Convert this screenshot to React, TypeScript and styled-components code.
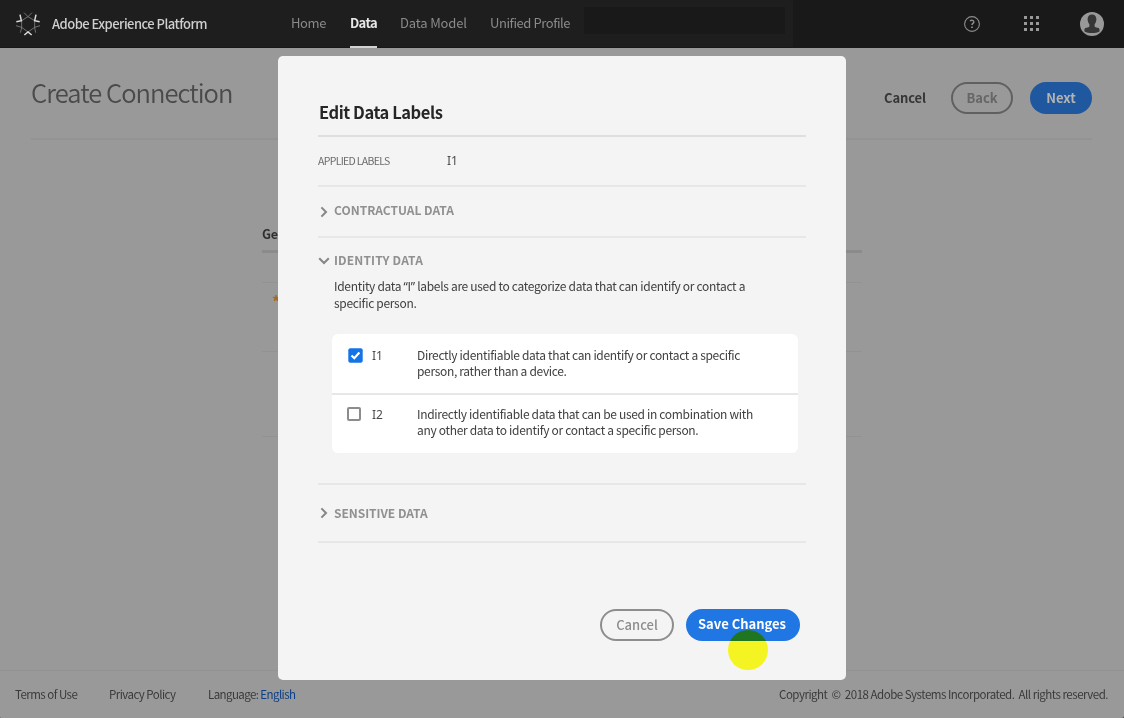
import React from 'react';
import styled, { createGlobalStyle } from 'styled-components';

const sans = '"Noto Sans CJK SC", "Noto Sans", sans-serif';

const GlobalStyle = createGlobalStyle`
  * { box-sizing: border-box; }
  body { margin: 0; background: #333; font-family: ${sans}; }
  button { font-family: inherit; margin: 0; }
  h1, h2, h3, p { margin: 0; }
`;

const Page = styled.div`
  position: relative;
  display: flex;
  flex-direction: column;
  width: 1124px;
  height: 718px;
  overflow: hidden;
  background: #999;
  border-radius: 0 0 2px 1px;
`;

/* ---- top bar ---- */
const TopBar = styled.header`
  display: flex;
  flex: 0 0 48px;
  height: 48px;
  background: #191919;
`;
const TopLeft = styled.div`
  display: flex;
  width: 793px;
  height: 48px;
  padding-left: 16px;
  align-items: center;
  background: #1e1e1e;
  box-shadow: inset 0 -1px #1a171a;
`;
const Brand = styled.div`
  flex: 0 0 251px;
  padding: 0 0 0 12px;
  font-size: 13px;
  font-weight: 500;
  line-height: 20px;
  letter-spacing: -0.53px;
  color: #cfcfcf;
  white-space: nowrap;
`;
const NavItem = styled.a<{ $w: number; $ls: number; $active?: boolean }>`
  flex: 0 0 ${p => p.$w}px;
  height: 48px;
  margin-right: 23px;
  line-height: 46px;
  font-size: 13px;
  font-weight: ${p => (p.$active ? 700 : 400)};
  letter-spacing: ${p => p.$ls}px;
  white-space: nowrap;
  color: ${p => (p.$active ? '#e8e8e8' : '#8a8a8a')};
  box-shadow: ${p => (p.$active ? 'inset 0 -2px #d2d2d2' : 'none')};
`;
const SearchSlot = styled.div`
  flex: 0 0 201px;
  height: 27px;
  margin: 0 0 7px -10px;
  background: #191919;
`;
const TopRight = styled.div`
  display: flex;
  flex: 1;
  height: 48px;
  align-items: center;
  justify-content: flex-end;
  padding-right: 20px;
`;
const HelpIcon = styled.svg`margin-right: 44px;`;
const AppsIcon = styled.svg`margin: 0 41px 1px 0;`;

/* ---- page behind the dialog ---- */
const Main = styled.main`
  flex: 1;
  padding: 0 32px 0 31px;
`;
const TitleRow = styled.div`
  display: flex;
  height: 92px;
  padding-top: 34px;
  border-bottom: 2px solid #939393;
`;
const PageTitle = styled.h1`
  flex: 1;
  margin-top: -8px;
  font-size: 25.5px;
  font-weight: 350;
  line-height: 36px;
  letter-spacing: -0.96px;
  color: #4a4a4a;
`;
const TextButton = styled.button`
  width: 42px;
  height: 32px;
  margin-right: 25px;
  padding: 0 0 1px;
  border: 0;
  background: none;
  font-size: 13px;
  font-weight: 700;
  letter-spacing: -0.15px;
  white-space: nowrap;
  color: #363636;
`;
const Pill = styled.button<{ $w: number; $bg?: string; $line?: string; $fg: string; $weight?: number; $lift?: number; $pull?: number }>`
  width: ${p => p.$w}px;
  height: 32px;
  padding: 0 ${p => p.$pull ?? 0}px ${p => p.$lift ?? 0}px 0;
  border: ${p => (p.$line ? `2px solid ${p.$line}` : '0')};
  border-radius: 16px;
  background: ${p => p.$bg ?? 'transparent'};
  color: ${p => p.$fg};
  font-size: 13px;
  font-weight: ${p => p.$weight ?? 500};
  line-height: 20px;
  white-space: nowrap;
`;
const Actions = styled.div<{ $gap: number }>`
  display: flex;
  gap: ${p => p.$gap}px;
`;
const Form = styled.section`
  width: 600px;
  margin: 84px 0 0 231px;
`;
const FormHeading = styled.h2`
  height: 29px;
  font-size: 12.5px;
  font-weight: 700;
  line-height: 20px;
  letter-spacing: -0.3px;
  color: #303030;
  border-bottom: 3px solid #8b8b8b;
`;
const FormRow = styled.div<{ $h: number }>`
  height: ${p => p.$h}px;
  padding: 8px 0 0 10px;
  border-bottom: 1px solid #929292;
  font-size: 16px;
  font-weight: 700;
  line-height: 20px;
  color: #a5691f;
`;
const Footer = styled.footer`
  display: flex;
  flex: 0 0 48px;
  height: 48px;
  padding: 0 16px 0 15px;
  border-top: 1px solid #929292;
  font-size: 11.5px;
  line-height: 46px;
  letter-spacing: -0.49px;
  white-space: pre;
  color: #3a3a3a;
`;
const FooterLink = styled.a<{ $w: number }>`
  width: ${p => p.$w}px;
  letter-spacing: -0.54px;
`;
const Language = styled.span`letter-spacing: -0.58px;`;
const Locale = styled.span`color: #0d3f87;`;
const Copyright = styled.span`margin-left: auto;`;

/* ---- dialog ---- */
const Dialog = styled.div`
  position: absolute;
  left: 278px;
  top: 56px;
  width: 568px;
  height: 624px;
  padding: 0 40px;
  background: #f4f4f4;
  border-radius: 5px;
`;
const DialogTitle = styled.h2`
  height: 81px;
  padding: 46px 0 0 1px;
  border-bottom: 2px solid #dfdfdf;
  font-size: 16.5px;
  font-weight: 700;
  line-height: 20px;
  letter-spacing: -0.44px;
  color: #262626;
`;
const Band = styled.div<{ $h: number; $lift?: number }>`
  display: flex;
  align-items: center;
  height: ${p => p.$h}px;
  padding-bottom: ${p => p.$lift ?? 0}px;
  border-bottom: 2px solid #e7e7e7;
`;
const AppliedCaption = styled.span`
  width: 129px;
  font-size: 10.5px;
  letter-spacing: -0.68px;
  line-height: 16px;
  color: #6c6c6c;
`;
const Code = styled.span`
  display: block;
  font-family: "Noto Sans", sans-serif;
  font-size: 12px;
  line-height: 16px;
  color: #4a4a4a;
`;
const Heading = styled.h3<{ $ls: number; $drop: number }>`
  display: flex;
  align-items: center;
  height: 20px;
  font-size: 12px;
  font-weight: 700;
  line-height: 20px;
  letter-spacing: ${p => p.$ls}px;
  color: #909090;
  svg { margin: ${p => p.$drop}px 4px 0 0; }
`;
const OpenSection = styled.div`
  height: 247px;
  padding-top: 12px;
  border-bottom: 2px solid #e7e7e7;
`;
const Intro = styled.p`
  height: 34px;
  margin: 7px 0 23px 16px;
  font-size: 12px;
  line-height: 17px;
  letter-spacing: -0.31px;
  color: #404040;
  white-space: nowrap;
`;
const Quote = styled.span`
  font-family: "Noto Sans", sans-serif;
  line-height: 1px;
`;
const Options = styled.div`
  width: 466px;
  margin-left: 14px;
  border-radius: 6px;
  background: #fff;
`;
const Option = styled.label<{ $h: number; $top: number; $last?: boolean }>`
  display: flex;
  height: ${p => p.$h}px;
  padding: ${p => p.$top}px 0 0 16px;
  border-bottom: ${p => (p.$last ? '0' : '2px solid #e7e7e7')};
`;
const BoxSlot = styled.span`
  width: 24px;
  padding-top: 1px;
  svg { display: block; }
`;
const CodeSlot = styled.span`
  width: 45px;
  padding-top: 1px;
`;
const Description = styled.p<{ $ls: number }>`
  font-size: 12px;
  line-height: 16px;
  letter-spacing: ${p => p.$ls}px;
  color: #404040;
  white-space: nowrap;
`;
const DialogActions = styled.div`
  display: flex;
  justify-content: flex-end;
  gap: 12px;
  padding: 66px 6px 0 0;
`;
const Cursor = styled.div`
  position: absolute;
  left: 728px;
  top: 630px;
  width: 40px;
  height: 40px;
  border-radius: 50%;
  background: #ffff24;
  mix-blend-mode: multiply;
`;

const Logo = () => (
  <svg width="24" height="24" viewBox="48 36 72 72" fill="none">
    <g stroke="#8e8e8e" strokeWidth="2.2">
      <path d="M72 38 84 50 104 62M96 38 84 50 65 62" />
      <path d="M65 60V84L61 98M104 60V84L107 98" />
      <path d="M48 77 65 82 84 96M120 77 104 82 84 96" />
    </g>
    <g stroke="#dcdcdc" strokeWidth="4.5">
      <path d="M49 65 64 62 60 44" />
      <path d="M119 65 104 62 108 44" />
      <path d="M73 105 84 96 95 105" />
    </g>
  </svg>
);

const Chevron = ({ open }: { open?: boolean }) => (
  <svg width="12" height="12" viewBox="0 0 12 12" fill="none" stroke="#868686" strokeWidth="2">
    <path d={open ? 'M1.2 3.2 6 8l4.8-4.8' : 'M3.4 1.4 8 6l-4.6 4.6'} />
  </svg>
);

export default function App() {
  return (
    <Page>
      <GlobalStyle />
      <TopBar>
        <TopLeft>
          <Logo />
          <Brand>Adobe Experience Platform</Brand>
          <NavItem $w={36} $ls={-0.36}>Home</NavItem>
          <NavItem $w={27} $ls={-0.66} $active>Data</NavItem>
          <NavItem $w={67} $ls={-0.14}>Data Model</NavItem>
          <NavItem $w={81} $ls={-0.43}>Unified Profile</NavItem>
          <SearchSlot />
        </TopLeft>
        <TopRight>
          <HelpIcon width="16" height="16" viewBox="0.5 0.5 16 16" fill="none" stroke="#8c8c8c">
            <circle cx="8.5" cy="8.5" r="7.4" strokeWidth="1.1" />
            <path d="M6.5 5.4c1.5-1.1 3.8-.6 3.8 1 0 1.5-1.8 1.5-1.8 3.2" strokeWidth="1.5" />
            <path d="M8.5 11v1.6" strokeWidth="1.7" />
          </HelpIcon>
          <AppsIcon width="15" height="15" viewBox="0 0 15 15" fill="#999">
            {[0, 6, 12].map(y => [0, 6, 12].map(x => <rect key={`${x}-${y}`} x={x} y={y} width="3" height="3" />))}
          </AppsIcon>
          <svg width="24" height="24" viewBox="0 0 24 24">
            <circle cx="12" cy="12" r="12" fill="#999" />
            <path
              fill="#363636"
              d="M12 2.6c2.7 0 4.4 1.8 4.4 4.6 0 2-.8 3.9-1.8 5v2c0 .5.3.8.9 1l3 .9c1 .4 1.2 1.4 1 3.4C17.4 20.8 14.8 21 12 21s-5.4-.2-7.5-1.5c-.2-2 0-3 1-3.4l3-.9c.6-.2.9-.5.9-1v-2c-1-1.1-1.8-3-1.8-5 0-2.8 1.7-4.600 4.400-4.600z"
            />
          </svg>
        </TopRight>
      </TopBar>

      <Main>
        <TitleRow>
          <PageTitle>Create Connection</PageTitle>
          <TextButton>Cancel</TextButton>
          <Actions $gap={17}>
            <Pill $w={62} $line="#606060" $fg="#666" $weight={700}>Back</Pill>
            <Pill $w={62} $bg="#1f589f" $fg="#b3b3b3" $weight={700}>Next</Pill>
          </Actions>
        </TitleRow>
        <Form>
          <FormHeading>Ge</FormHeading>
          <FormRow $h={30} />
          <FormRow $h={69}>*</FormRow>
          <FormRow $h={85} />
        </Form>
      </Main>

      <Footer>
        <FooterLink $w={94}>Terms of Use</FooterLink>
        <FooterLink $w={99}>Privacy Policy</FooterLink>
        <Language>Language<Locale>: English</Locale></Language>
        <Copyright>{'Copyright  ©  2018 Adobe Systems Incorporated.  All rights reserved.'}</Copyright>
      </Footer>

      <Dialog role="dialog">
        <DialogTitle>Edit Data Labels</DialogTitle>
        <Band $h={50}>
          <AppliedCaption>APPLIED LABELS</AppliedCaption>
          <Code>I1</Code>
        </Band>
        <Band $h={51} $lift={4}>
          <Heading $ls={0} $drop={4}><Chevron />CONTRACTUAL DATA</Heading>
        </Band>
        <OpenSection>
          <Heading $ls={0.14} $drop={2}><Chevron open />IDENTITY DATA</Heading>
          <Intro>
            Identity data <Quote>“</Quote>I<Quote>”</Quote> labels are used to categorize data that can identify or contact a<br />
            specific person.
          </Intro>
          <Options>
            <Option $h={61} $top={13}>
              <BoxSlot>
                <svg width="15" height="15" viewBox="0 0 15 15">
                  <rect x="0.3" y="0.3" width="14.4" height="14.4" rx="2" fill="#1473e6" />
                  <path d="M3.5 7.5 6.3 10.2 11.4 4.5" fill="none" stroke="#fff" strokeWidth="2.2" />
                </svg>
              </BoxSlot>
              <CodeSlot><Code>I1</Code></CodeSlot>
              <Description $ls={-0.33}>
                Directly identifiable data that can identify or contact a specific<br />person, rather than a device.
              </Description>
            </Option>
            <Option $h={58} $top={11} $last>
              <BoxSlot>
                <svg width="15" height="14" viewBox="1 0 15 14" overflow="visible">
                  <rect x="1" y="1" width="12" height="12" rx="1" fill="none" stroke="#8c8c8c" strokeWidth="2" />
                </svg>
              </BoxSlot>
              <CodeSlot><Code>I2</Code></CodeSlot>
              <Description $ls={-0.32}>
                Indirectly identifiable data that can be used in combination with<br />any other data to identify or contact a specific person.
              </Description>
            </Option>
          </Options>
        </OpenSection>
        <Band $h={58}>
          <Heading $ls={-0.04} $drop={0}><Chevron />SENSITIVE DATA</Heading>
        </Band>
        <DialogActions>
          <Pill $w={74} $line="#8e8e8e" $fg="#8c8c8c">Cancel</Pill>
          <Pill $w={114} $bg="#2076e3" $fg="#fff" $weight={700} $lift={2} $pull={2}>Save Changes</Pill>
        </DialogActions>
      </Dialog>
      <Cursor />
    </Page>
  );
}
